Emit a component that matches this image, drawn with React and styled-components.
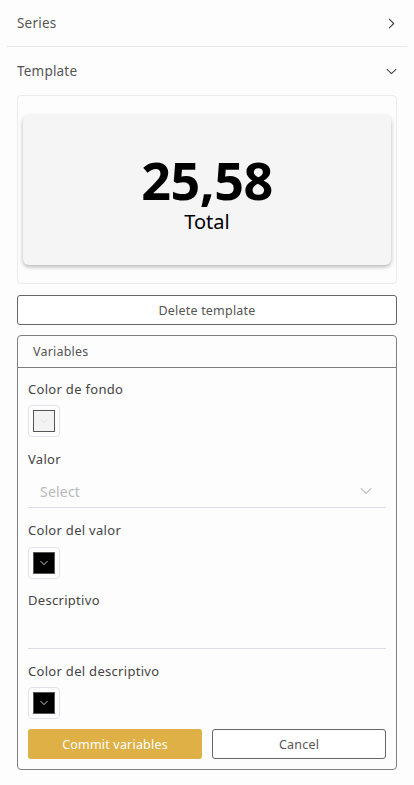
import React from 'react'
import styled, { createGlobalStyle } from 'styled-components'

const GlobalStyle = createGlobalStyle`
  body {
    margin: 0;
    background: #fdfdfd;
    font-family: "Noto Sans", "DejaVu Sans", sans-serif;
    color: #444;
  }
  * { box-sizing: border-box; }
`

const Page = styled.div`
  padding: 0 7px;
  width: 414px;
`

const AccordionHeader = styled.div`
  display: flex;
  align-items: center;
  justify-content: space-between;
  height: ${props => props.height || 47}px;
  padding: 0 10px;
  font-size: 13.5px;
  letter-spacing: 0.2px;
  color: #555;
  border-bottom: ${props => props.divider ? '1px solid #e8e8e8' : 'none'};
`

const AccordionBody = styled.div`
  padding: 0 10px 15px;
`

const PreviewFrame = styled.div`
  border: 1px solid #ebebeb;
  border-radius: 4px;
  padding: 19px 5px 18px;
`

const KpiCard = styled.div`
  height: 150px;
  padding-top: 4px;
  background: #f5f5f5;
  border-radius: 6px;
  box-shadow: 0 2px 4px rgba(0, 0, 0, 0.28);
  display: flex;
  flex-direction: column;
  align-items: center;
  justify-content: center;
  color: #000;
`

const KpiValue = styled.div`
  font-size: 52px;
  font-weight: 700;
  line-height: 60px;
  letter-spacing: -0.5px;
`

const KpiLabel = styled.div`
  font-size: 20px;
  line-height: 24px;
`

const OutlineButton = styled.button`
  display: block;
  width: 100%;
  height: 30px;
  margin-top: ${props => props.top || 0}px;
  background: #fff;
  border: 1px solid #666;
  border-radius: 3px;
  font-family: inherit;
  font-size: 12.5px;
  letter-spacing: 0.2px;
  color: #555;
`

const Panel = styled.div`
  margin-top: 10px;
  border: 1px solid #808080;
  border-radius: 4px;
`

const PanelHeader = styled.div`
  height: 32px;
  display: flex;
  align-items: center;
  padding-left: 15px;
  border-bottom: 1px solid #808080;
  font-size: 12.5px;
  letter-spacing: 0.2px;
  color: #555;
`

const PanelBody = styled.div`
  padding: 13px 10px 10px;
`

const Label = styled.div`
  font-size: 13px;
  line-height: 16px;
  letter-spacing: 0.3px;
  color: #444;
  margin-top: ${props => props.top || 0}px;
`

const SwatchButton = styled.div`
  width: 32px;
  height: 32px;
  margin-top: ${props => props.top || 8}px;
  border: 1px solid #e2e2ec;
  border-radius: 4px;
  display: flex;
  align-items: center;
  justify-content: center;
`

const Swatch = styled.div`
  width: 22px;
  height: 22px;
  border: 1px solid #555;
  background: ${props => props.color};
  display: flex;
  align-items: center;
  justify-content: center;
`

const SelectBox = styled.div`
  height: 33px;
  margin-top: 8px;
  display: flex;
  align-items: center;
  justify-content: space-between;
  padding: 0 14px 0 12px;
  border-bottom: 1px solid #dcdce6;
  font-size: 14px;
  letter-spacing: 0.2px;
  color: #b8b8b8;
`

const TextInput = styled.div`
  height: 41px;
  border-bottom: 1px solid #dcdce6;
`

const ButtonRow = styled.div`
  display: grid;
  grid-template-columns: 1fr 1fr;
  gap: 10px;
  margin-top: 10px;
`

const PrimaryButton = styled.button`
  height: 30px;
  background: #dfb045;
  border: none;
  border-radius: 3px;
  color: #fff;
  font-family: inherit;
  font-size: 12.5px;
  letter-spacing: 0.2px;
`

const Chevron = ({ dir = 'down', color = '#444', size = 10 }) => (
  <svg width={size} height={size} viewBox="0 0 10 10" fill="none">
    <path
      d={dir === 'right' ? 'M3 1l4 4-4 4' : 'M1 3l4 4 4-4'}
      stroke={color}
      strokeWidth="1"
      strokeLinecap="round"
      strokeLinejoin="round"
    />
  </svg>
)

const ColorField = ({ color, top, iconColor }) => (
  <SwatchButton top={top}>
    <Swatch color={color}>
      <Chevron color={iconColor} size={8} />
    </Swatch>
  </SwatchButton>
)

export default function App() {
  return (
    <Page>
      <GlobalStyle />
      <AccordionHeader divider height={47}>
        <span>Series</span>
        <Chevron dir="right" size={11} />
      </AccordionHeader>
      <AccordionHeader height={48}>
        <span>Template</span>
        <Chevron size={11} />
      </AccordionHeader>
      <AccordionBody>
        <PreviewFrame>
          <KpiCard>
            <KpiValue>25,58</KpiValue>
            <KpiLabel>Total</KpiLabel>
          </KpiCard>
        </PreviewFrame>
        <OutlineButton top={11}>Delete template</OutlineButton>
        <Panel>
          <PanelHeader>Variables</PanelHeader>
          <PanelBody>
            <Label>Color de fondo</Label>
            <ColorField color="#f3f3f3" iconColor="#ddd" />
            <Label top={14}>Valor</Label>
            <SelectBox>
              <span>Select</span>
              <Chevron color="#bbb" size={12} />
            </SelectBox>
            <Label top={14}>Color del valor</Label>
            <ColorField color="#000" iconColor="#fff" top={9} />
            <Label top={13}>Descriptivo</Label>
            <TextInput />
            <Label top={14}>Color del descriptivo</Label>
            <ColorField color="#000" iconColor="#fff" />
            <ButtonRow>
              <PrimaryButton>Commit variables</PrimaryButton>
              <OutlineButton>Cancel</OutlineButton>
            </ButtonRow>
          </PanelBody>
        </Panel>
      </AccordionBody>
    </Page>
  )
}
